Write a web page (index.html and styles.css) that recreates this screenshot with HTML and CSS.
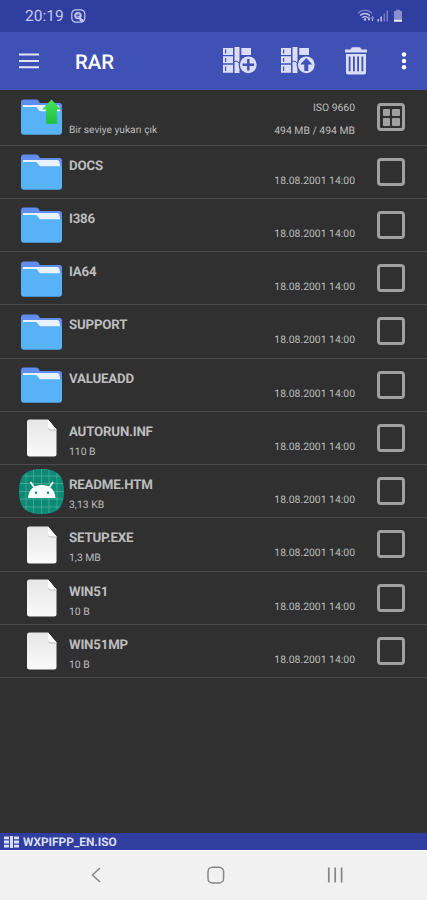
FILE: index.html
```html
<!DOCTYPE html>
<html lang="tr">
<head>
<meta charset="utf-8">
<title>RAR</title>
<link rel="stylesheet" href="styles.css">
</head>
<body>
<svg width="0" height="0" class="defs">
  <defs>
    <linearGradient id="paper" x1="0" y1="0" x2="0" y2="1"><stop offset="0" stop-color="#e6e6e6"/><stop offset="1" stop-color="#fafafa"/></linearGradient>
    <linearGradient id="green" x1="0" y1="0" x2="0" y2="1"><stop offset="0" stop-color="#46e35e"/><stop offset="1" stop-color="#1fbf3c"/></linearGradient>
    <symbol id="folder" viewBox="0 0 45 45">
      <path d="M2 8.500q0-3 3-3h12q2 0 2.800 1.600l1 2H40.500q2.500 0 2.500 2.500V24H2z" fill="#5f8ef0"/>
      <path d="M3.800 11h34.500q1.500 0 2 1.500l1.200 6H3.800z" fill="#e9f3ff"/>
      <path d="M2 13h14.500q1.400 0 2.200 1.400l1.300 1.800q.8 1.100 2.200 1.100H43v20.500q0 3-3 3H5q-3 0-3-3z" fill="#57b2f8"/>
    </symbol>
    <symbol id="file" viewBox="0 0 45 45">
      <path d="M10.500 4.500H29l8.500 10v24.500q0 2.500-2.500 2.500H10.500q-2.500 0-2.500-2.500V7q0-2.500 2.500-2.500z" fill="url(#paper)"/>
      <path d="M29 4.500l8.500 10h-6q-2.500 0-2.500-2.500z" fill="#fff"/>
      <path d="M29 12.500q0 3 3 3h5.500v-1h-5.700q-2.500 0-2.800-3z" fill="#c2c2c2"/>
    </symbol>
    <symbol id="android" viewBox="0 0 45 45">
      <path d="M22.500 0C38.500 0 45 6.500 45 22.500S38.500 45 22.500 45 0 38.500 0 22.500 6.500 0 22.500 0z" fill="#0b8a75"/>
      <path d="M7 4v37M14.500 1v43M22.500 0v45M30 1v43M38 4v37M4 7h37M1 14.500h43M0 22.500h45M1 30h43M4 38h37" stroke="#5fb5a6" stroke-width=".6" fill="none"/>
      <path d="M9 29C9.500 20.500 15 16 22.700 16S36 20.500 36.500 29z" fill="#fff"/>
      <path d="M11.500 13l4 6M34 13l-4 6" stroke="#fff" stroke-width="1.700"/>
      <circle cx="17" cy="23.700" r="1.200" fill="#0b8a75"/><circle cx="29" cy="23.700" r="1.200" fill="#0b8a75"/>
    </symbol>
    <symbol id="books" viewBox="0 0 34 28">
      <path fill="#dadefa" fill-rule="evenodd" d="M0 1h10v7H0zM0 9.300h10v7H0zM0 17.700h10v8H0zM2 2.500v4h1.200v-4zM2 11v4h1.200v-4zM2 19.500v4.500h1.200v-4.500z"/>
      <path fill="#dadefa" d="M11.500 0h5v26h-5zM18.300 1h9.700v7h-9.700z"/>
      <path d="M10.500 14.300h3.500l3 2.500" fill="none" stroke="#4150b5" stroke-width="1"/>
      <circle cx="25.300" cy="17.800" r="9.700" fill="#4150b5"/>
      <circle cx="25.300" cy="17.800" r="8.400" fill="#dadefa"/>
    </symbol>
  </defs>
</svg>
<div class="screen">
  <div class="status">
    <span class="clock">20:19</span>
    <svg class="notice" width="15" height="15" viewBox="0 0 15 15"><rect x=".8" y=".8" width="13" height="12.400" rx="4" fill="none" stroke="#c3c8ee" stroke-width="1.200"/><circle cx="7" cy="6.600" r="3.700" fill="#c3c8ee"/><path d="M5.600 6.500h2.800q0-1.500-1.400-1.500T5.600 6.600q0 1.600 1.600 1.600h1" fill="none" stroke="#303f9f" stroke-width=".7"/><path d="M8 8l4.500 2.500-1.500 3-2.500-2z" fill="#c3c8ee"/></svg>
    <svg class="signals" width="47" height="16" viewBox="0 0 47 16"><g fill="none" stroke="#c3c8ee" stroke-width="1.300"><path d="M1 5.200q7-6 14 0" opacity=".55"/><path d="M3 7.500q5-4 10 0M5.200 9.700q2.800-2 5.600 0"/></g><circle cx="8" cy="11.500" r="1.200" fill="#c3c8ee"/><path d="M10.500 10.500h3L12 13zM14 10.500h3L15.500 8zM11.500 8.500h1v3h-1zM15 9.500h1V13h-1z" fill="#c3c8ee"/><path d="M20.500 11h1.300v2.500h-1.300zM23.500 8.500h1.300v5h-1.300z" fill="#d7daf5"/><path d="M26.600 5.500h1.300v8h-1.300zM29.600 2.500h1.300v11h-1.300z" fill="#7b85c8"/><path d="M37 3h2.200V1.700h3.600V3H45v8.500h-8z" fill="#8790cd"/><path d="M37 11.500h8v2.300h-8z" fill="#e4e6fa"/></svg>
  </div>
  <header class="toolbar">
    <svg class="menu" width="20" height="16" viewBox="0 0 20 16"><path d="M0 1.500h20M0 8h20M0 14.200h20" stroke="#e3e6fb" stroke-width="2"/></svg>
    <h1 class="title">RAR</h1>
    <div class="actions">
      <svg width="34" height="28" viewBox="0 0 34 28"><use href="#books"/><path d="M25.300 12v11.600M19.500 17.800h11.600" stroke="#4150b5" stroke-width="2.400"/></svg>
      <svg width="34" height="28" viewBox="0 0 34 28"><use href="#books"/><path d="M25.300 11l6 6.500h-4V24h-4v-6.500h-4z" fill="#4150b5"/></svg>
      <svg class="trash" width="24" height="28" viewBox="0 0 24 28"><path d="M7 1.500Q7.500.3 9 .3h6q1.500 0 2 1.200l.5 1.100H23v3H1v-3h5.500z" fill="#dadefa"/><path d="M2 7h20v18.500q0 2-2 2H4q-2 0-2-2z" fill="#dadefa"/><path d="M5.600 9.500v14.800M9.900 9.500v14.800M14.100 9.500v14.800M18.400 9.500v14.800" stroke="#4150b5" stroke-width="1.800"/></svg>
      <svg class="more" width="6" height="18" viewBox="0 0 6 18"><g fill="#fff"><circle cx="3" cy="2.500" r="2.200"/><circle cx="3" cy="9" r="2.200"/><circle cx="3" cy="15.300" r="2.200"/></g></svg>
    </div>
  </header>
  <main class="list">
    <div class="row up">
      <svg class="icon" viewBox="0 0 45 45"><use href="#folder"/><path d="M32.500 5.500l9.500 10h-4v14.200H27V15.500h-4z" fill="url(#green)"/></svg>
      <div class="info"><span class="name"></span><span class="size">Bir seviye yukarı çık</span></div>
      <div class="meta"><span>ISO 9660</span><span>494 MB / 494 MB</span></div>
      <div class="box all"><i></i><i></i><i></i><i></i></div>
    </div>
    <div class="row"><svg class="icon"><use href="#folder"/></svg><div class="info"><span class="name">DOCS</span></div><span class="date">18.08.2001 14:00</span><div class="box"></div></div>
    <div class="row"><svg class="icon"><use href="#folder"/></svg><div class="info"><span class="name">I386</span></div><span class="date">18.08.2001 14:00</span><div class="box"></div></div>
    <div class="row"><svg class="icon"><use href="#folder"/></svg><div class="info"><span class="name">IA64</span></div><span class="date">18.08.2001 14:00</span><div class="box"></div></div>
    <div class="row"><svg class="icon"><use href="#folder"/></svg><div class="info"><span class="name">SUPPORT</span></div><span class="date">18.08.2001 14:00</span><div class="box"></div></div>
    <div class="row"><svg class="icon"><use href="#folder"/></svg><div class="info"><span class="name">VALUEADD</span></div><span class="date">18.08.2001 14:00</span><div class="box"></div></div>
    <div class="row"><svg class="icon"><use href="#file"/></svg><div class="info"><span class="name">AUTORUN.INF</span><span class="size">110 B</span></div><span class="date">18.08.2001 14:00</span><div class="box"></div></div>
    <div class="row"><svg class="icon"><use href="#android"/></svg><div class="info"><span class="name">README.HTM</span><span class="size">3,13 KB</span></div><span class="date">18.08.2001 14:00</span><div class="box"></div></div>
    <div class="row"><svg class="icon"><use href="#file"/></svg><div class="info"><span class="name">SETUP.EXE</span><span class="size">1,3 MB</span></div><span class="date">18.08.2001 14:00</span><div class="box"></div></div>
    <div class="row"><svg class="icon"><use href="#file"/></svg><div class="info"><span class="name">WIN51</span><span class="size">10 B</span></div><span class="date">18.08.2001 14:00</span><div class="box"></div></div>
    <div class="row"><svg class="icon"><use href="#file"/></svg><div class="info"><span class="name">WIN51MP</span><span class="size">10 B</span></div><span class="date">18.08.2001 14:00</span><div class="box"></div></div>
  </main>
  <footer class="path">
    <svg width="15" height="12" viewBox="0 0 15 12"><path d="M0 .5h5v2.800H0zM0 4.600h5v2.800H0zM0 8.700h5v2.800H0zM6 0h3v12H6zM10 .5h5v2.800h-5zM10 4.600h5v2.800h-5zM10 8.700h5v2.800h-5z" fill="#dadefa"/></svg>
    <span>WXPIFPP_EN.ISO</span>
  </footer>
  <nav class="nav">
    <svg width="20" height="20" viewBox="0 0 20 20"><path d="M14 3L6.500 10l7.500 7" fill="none" stroke="#858585" stroke-width="1.500"/></svg>
    <svg width="20" height="20" viewBox="0 0 20 20"><rect x="2" y="2.300" width="15.600" height="15.600" rx="4.500" fill="none" stroke="#858585" stroke-width="1.500"/></svg>
    <svg width="20" height="20" viewBox="0 0 20 20"><path d="M3.800 2.500v15M10.200 2.500v15M16.600 2.500v15" stroke="#858585" stroke-width="1.700"/></svg>
  </nav>
</div>
</body>
</html>
```
FILE: styles.css
```css
* { box-sizing: border-box; }
body { margin: 0; font-family: Roboto, sans-serif; background: #303030; text-rendering: geometricPrecision; }
svg { display: block; flex: none; }
.defs { position: absolute; }
.screen { width: 427px; height: 900px; display: flex; flex-direction: column; overflow: hidden; }

.status { height: 32px; background: #303f9f; display: flex; align-items: center; padding: 0 23px 0 25px; color: #c3c8ee; }
.clock { font-size: 15.5px; line-height: 18px; }
.notice { margin-left: 7px; }
.signals { margin-left: auto; }

.toolbar { height: 58px; background: #4051b5; display: flex; align-items: center; padding: 0 20px 0 19px; }
.title { margin: 1px 0 0 36px; font-size: 20.3px; line-height: 24px; font-weight: 500; color: #fff; }
.actions { margin-left: auto; display: flex; align-items: center; gap: 24px; }
.trash { margin-left: 5px; }
.more { margin-left: 9px; }

.list { flex: 1; min-height: 0; }
.row { height: 53.28px; border-bottom: 1px solid #4a4a4a; display: flex; padding: 0 22px 0 19px; color: #bdbdbd; font-size: 10.4px; line-height: 14px; }
.row.up { height: 55.6px; }
.icon { width: 45px; height: 45px; margin-top: 3.5px; }
.up .icon { margin-top: 4px; }
.info { width: 150px; margin: 12px 0 0 5px; display: flex; flex-direction: column; }
.name { height: 18px; font-size: 13.3px; letter-spacing: -.2px; line-height: 18px; font-weight: 700; }
.size { margin-top: 3px; }
.up .size { margin-top: 4px; font-size: 10.2px; }
.date { margin: 28px 0 0 auto; }
.meta { margin: 11px 0 0 auto; display: flex; flex-direction: column; gap: 9px; text-align: right; }
.box { width: 28px; height: 28px; margin: 12px 0 0 22px; border: 3px solid #a0a0a0; border-radius: 4px; }
.up .box { margin-top: 13px; }
.all { display: grid; grid-template-columns: 7.5px 7.5px; grid-template-rows: 7.5px 7.5px; gap: 2px; place-content: center; }
.all i { background: #a0a0a0; border-radius: 1px; }

.path { height: 17px; background: #303f9f; display: flex; align-items: center; gap: 4px; padding: 1px 4px 0; color: #dadefa; font-size: 11.9px; line-height: 16px; font-weight: 700; }
.nav { height: 50px; background: #f1f1f1; border-top: 1px solid #fff; display: flex; align-items: center; justify-content: space-between; padding: 0 82px 2px 86px; }
```
